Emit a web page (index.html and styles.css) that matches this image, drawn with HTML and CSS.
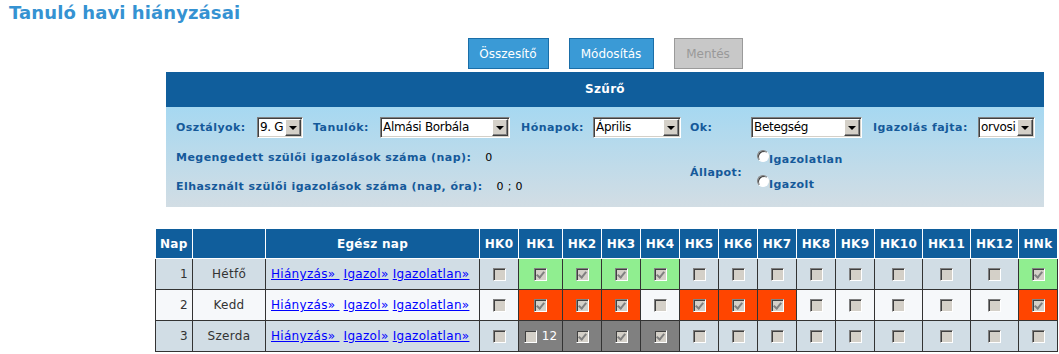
FILE: index.html
```html
<!DOCTYPE html>
<html>
  <head>
    <title>Tanuló havi hiányzásai</title>
    <link rel="stylesheet" href="styles.css">
  </head>
  <body>
    <h1 class="title">Tanuló havi hiányzásai</h1>

    <div class="actions">
      <button class="btn btn-sum">Összesítő</button>
      <button class="btn btn-edit">Módosítás</button>
      <button class="btn btn-off" disabled>Mentés</button>
    </div>

    <div class="filter">
      <div class="filter-head">Szűrő</div>
      <div class="filter-body">
        <span class="flabel">Osztályok:</span>
        <span class="select w-class"><span class="select-val">9. G</span><span class="select-btn"></span></span>
        <span class="flabel">Tanulók:</span>
        <span class="select w-student"><span class="select-val">Almási Borbála</span><span class="select-btn"></span></span>
        <span class="flabel">Hónapok:</span>
        <span class="select w-month"><span class="select-val">Április</span><span class="select-btn"></span></span>
        <span class="flabel">Ok:</span>
        <span class="select w-reason"><span class="select-val">Betegség</span><span class="select-btn"></span></span>
        <span class="flabel">Igazolás fajta:</span>
        <span class="select w-kind"><span class="select-val">orvosi</span><span class="select-btn"></span></span>

        <div class="counts">
          <div class="count-line"><span class="flabel">Megengedett szülői igazolások száma (nap):</span><span class="count-val">0</span></div>
          <div class="count-line"><span class="flabel">Elhasznált szülői igazolások száma (nap, óra):</span><span class="count-val">0 ; 0</span></div>
        </div>
        <span class="flabel state-label">Állapot:</span>
        <div class="radios">
          <div class="radio-line"><span class="radio"></span><span class="flabel">Igazolatlan</span></div>
          <div class="radio-line"><span class="radio"></span><span class="flabel">Igazolt</span></div>
        </div>
      </div>
    </div>

    <table class="grid">
      <colgroup>
        <col style="width:37px"><col style="width:73px"><col style="width:214px">
        <col style="width:39px"><col style="width:44px"><col style="width:39px"><col style="width:39px">
        <col style="width:39px"><col style="width:39px"><col style="width:39px"><col style="width:39px">
        <col style="width:39px"><col style="width:39px"><col style="width:48px"><col style="width:48px">
        <col style="width:48px"><col style="width:39px">
      </colgroup>
      <thead>
        <tr>
          <th>Nap</th><th></th><th>Egész nap</th>
          <th>HK0</th><th>HK1</th><th>HK2</th><th>HK3</th><th>HK4</th><th>HK5</th><th>HK6</th>
          <th>HK7</th><th>HK8</th><th>HK9</th><th>HK10</th><th>HK11</th><th>HK12</th><th>HNk</th>
        </tr>
      </thead>
      <tbody id="rows"></tbody>
    </table>

    <script>
      const days = [
        { n: 1, name: "Hétfő",  cells: ["", "g", "g", "g", "g", "", "", "", "", "", "", "", "", "g"] },
        { n: 2, name: "Kedd",   cells: ["", "r", "r", "r", "", "r", "r", "r", "", "", "", "", "", "r"] },
        { n: 3, name: "Szerda", cells: ["", "x", "s", "s", "s", "", "", "", "", "", "", "", "", ""] }
      ];
      const tbody = document.getElementById("rows");

      days.forEach(function(day, i) {
        let html = '<td class="num">' + day.n + '</td>' +
          '<td class="day">' + day.name + '</td>' +
          '<td class="links"><a href="#">Hiányzás»&nbsp;</a> <a href="#">Igazol»</a> <a href="#">Igazolatlan»</a></td>';
        day.cells.forEach(function(c) {
          if (c === "g") html += '<td class="hk ok"><span class="cb on"></span></td>';
          else if (c === "r") html += '<td class="hk bad"><span class="cb on"></span></td>';
          else if (c === "s") html += '<td class="hk gray"><span class="cb on"></span></td>';
          else if (c === "x") html += '<td class="hk gray"><span class="cb"></span> <span class="hours">12</span></td>';
          else html += '<td class="hk"><span class="cb"></span></td>';
        });
        const tr = document.createElement("tr");
        tr.className = i % 2 ? "even" : "odd";
        tr.innerHTML = html;
        tbody.appendChild(tr);
      });
    </script>
  </body>
</html>
```

FILE: styles.css
```css
body {
  margin: 0;
  font-family: "DejaVu Sans", Verdana, sans-serif;
  font-size: 11px;
  color: #000;
  background: #fff;
}
.title {
  margin: 0;
  padding: 2px 0 0 9px;
  height: 34px;
  box-sizing: border-box;
  font-size: 18px;
  letter-spacing: 0.1px;
  color: #3592d2;
}
.actions {
  margin-left: 166px;
  width: 878px;
  display: flex;
  justify-content: center;
  gap: 20px;
  padding: 4px 0 0 0;
}
.btn {
  height: 31px;
  padding: 0;
  border: 1px solid #1a6ea8;
  background: #3a9ad6;
  color: #fff;
  font-family: "DejaVu Sans", Verdana, sans-serif;
  font-size: 12px;
}
.btn-sum { width: 81px; }
.btn-edit { width: 85px; }
.btn-off {
  width: 69px;
  background: #c8c8c8;
  border-color: #9a9a9a;
  color: #999;
}
.filter {
  margin: 3px 0 0 166px;
  width: 878px;
}
.filter-head {
  height: 35px;
  line-height: 35px;
  background: #105e9c;
  color: #fff;
  font-weight: bold;
  font-size: 12px;
  letter-spacing: 0.3px;
  text-align: center;
}
.filter-body {
  height: 100px;
  box-sizing: border-box;
  padding: 10px 0 0 10px;
  background: linear-gradient(#a6d8f1, #d2dde4);
  display: grid;
  grid-template-columns: 81px 56px 67px 141px 72px 97px 61px 122px 105px auto;
  grid-template-rows: 21px 58px;
  row-gap: 5px;
  align-items: center;
}
.flabel {
  font-weight: bold;
  color: #15599a;
  letter-spacing: 0.45px;
}
.select {
  display: flex;
  height: 21px;
  box-sizing: border-box;
  border: 1px solid;
  border-color: #808080 #fff #fff #808080;
  box-shadow: inset 1px 1px #404040, inset -1px -1px #d4d0c8;
  background: #fff;
  padding: 1px;
  font-size: 12px;
  letter-spacing: -0.3px;
}
.select-val {
  flex: 1;
  overflow: hidden;
  white-space: nowrap;
  line-height: 17px;
  padding-left: 1px;
}
.select-btn {
  flex: none;
  width: 16px;
  height: 17px;
  box-sizing: border-box;
  background: #d4d0c8;
  border: 1px solid;
  border-color: #fff #404040 #404040 #fff;
  box-shadow: inset -1px -1px #808080;
  position: relative;
}
.select-btn::after {
  content: "";
  position: absolute;
  left: 3px;
  top: 6px;
  border-left: 4px solid transparent;
  border-right: 4px solid transparent;
  border-top: 4px solid #000;
}
.w-class { width: 46px; }
.w-student { width: 130px; }
.w-month { width: 88px; }
.w-reason { width: 111px; }
.w-kind { width: 57px; }
.counts {
  grid-column: 1 / 7;
}
.count-line {
  height: 29px;
  line-height: 29px;
}
.count-val {
  margin-left: 14px;
  letter-spacing: 0.3px;
}
.state-label {
  grid-column: 7;
}
.radios {
  grid-column: 8 / 11;
  padding-left: 6px;
}
.radio-line {
  display: flex;
  align-items: center;
  height: 25px;
}
.radio {
  width: 12px;
  height: 12px;
  box-sizing: border-box;
  border-radius: 50%;
  border: 1px solid;
  border-color: #808080 #fff #fff #808080;
  box-shadow: inset 1px 1px #404040;
  background: #fff;
  margin-top: -8px;
}
.grid {
  margin: 22px 0 0 155px;
  border-collapse: collapse;
  table-layout: fixed;
  width: 902px;
}
.grid th {
  height: 29px;
  padding: 0;
  background: #105e9c;
  color: #fff;
  font-weight: bold;
  font-size: 12px;
  letter-spacing: 0.3px;
  border: 1px solid #fff;
  border-top: 0;
}
.grid th:first-child { border-left: 0; }
.grid td {
  height: 30px;
  padding: 0;
  border: 1px solid #333;
  text-align: center;
  color: #333;
  font-size: 12px;
  letter-spacing: 0.3px;
}
.grid tr.odd td { background: #d1dde5; }
.grid tr.even td { background: #f6f8fa; }
.grid td.num {
  text-align: right;
  padding-right: 4px;
}
.grid td.links {
  text-align: left;
  padding-left: 5px;
  white-space: nowrap;
  overflow: hidden;
}
.links a {
  color: #0000ff;
}
.grid tr td.ok { background: #90ee90; }
.grid tr td.bad { background: #ff4500; }
.grid tr td.gray { background: #808080; }
.cb {
  display: inline-block;
  width: 13px;
  height: 13px;
  box-sizing: border-box;
  vertical-align: middle;
  border: 1px solid;
  border-color: #808080 #fff #fff #808080;
  box-shadow: inset 1px 1px #404040;
  background: #d4d0c8;
  position: relative;
}
.cb.on::after {
  content: "";
  position: absolute;
  left: 3px;
  top: 1px;
  width: 3px;
  height: 6px;
  border: solid #808080;
  border-width: 0 2px 2px 0;
  transform: rotate(40deg);
}
.hours {
  color: #fff;
  vertical-align: middle;
  margin-left: 1px;
}
```
